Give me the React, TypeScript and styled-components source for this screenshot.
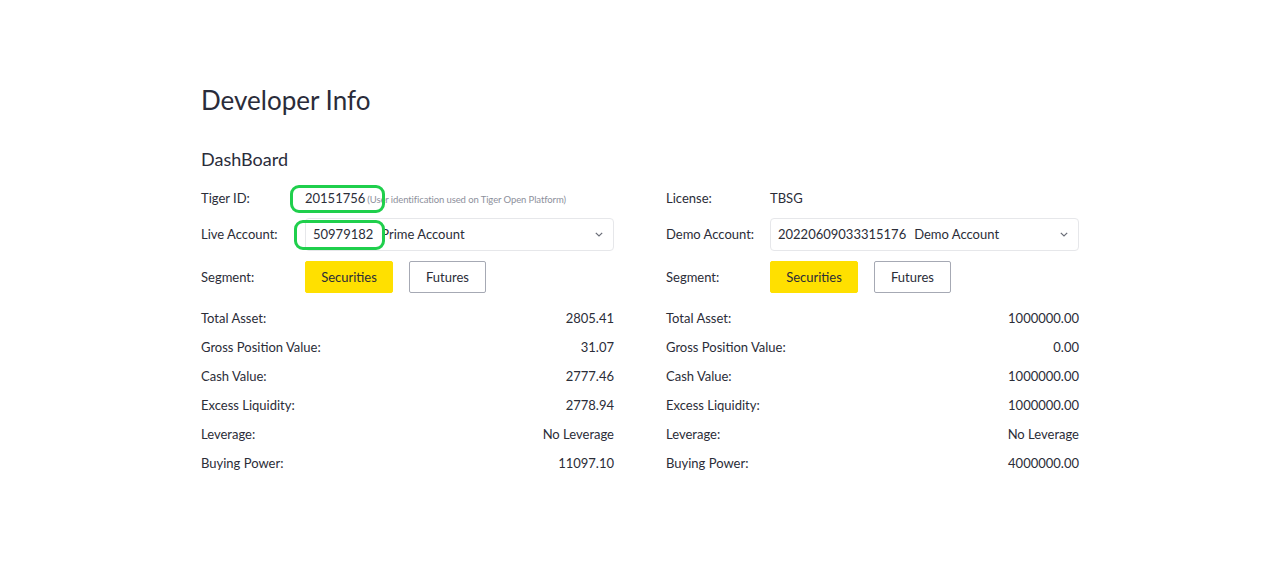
import React from "react";
import styled, { createGlobalStyle } from "styled-components";

const Global = createGlobalStyle`
  html, body { margin: 0; padding: 0; background: #fff; }
  body { font-family: Lato, "Open Sans", Arial, sans-serif; color: #2b2d38; }
`;

const Page = styled.div`
  width: 878px;
  margin-left: 201px;
  padding-top: 84px;
`;

const Title = styled.h1`
  margin: 0;
  font-size: 26px;
  font-weight: 400;
  line-height: 32px;
  color: #2a2c3a;
`;

const Section = styled.h2`
  margin: 31px 0 10px;
  font-size: 18px;
  font-weight: 400;
  line-height: 24px;
  color: #2a2c3a;
`;

const Columns = styled.div`
  display: grid;
  grid-template-columns: 413px 413px;
  column-gap: 52px;
`;

const Col = styled.div`
  display: flex;
  flex-direction: column;
`;

const Row = styled.div<{ $h: number }>`
  display: grid;
  grid-template-columns: 104px 1fr;
  align-items: center;
  height: ${(p) => p.$h}px;
  font-size: 13px;
`;

const Label = styled.span`
  color: #2b2d38;
`;

const Value = styled.span`
  position: relative;
  display: flex;
  align-items: baseline;
  gap: 2px;
`;

const Hint = styled.span`
  font-size: 9.5px;
  color: #8d909c;
  letter-spacing: -0.1px;
`;

const Select = styled.div`
  position: relative;
  height: 33px;
  box-sizing: border-box;
  border: 1px solid #e6e7ea;
  border-radius: 4px;
  display: flex;
  align-items: center;
  padding: 0 10px 0 7px;
  gap: 8px;
`;

const Grow = styled.span`
  flex: 1;
`;

const Buttons = styled.div`
  display: flex;
  gap: 16px;
`;

const SegButton = styled.button<{ $active?: boolean; $w: number }>`
  width: ${(p) => p.$w}px;
  height: 32px;
  box-sizing: border-box;
  padding: 0;
  border-radius: 2px;
  font-family: inherit;
  font-size: 13px;
  color: #2b2d38;
  background: ${(p) => (p.$active ? "#ffe000" : "#fff")};
  border: 1px solid ${(p) => (p.$active ? "#ffe000" : "#a6a9b4")};
`;

const Stats = styled.div`
  display: flex;
  flex-direction: column;
  margin-top: 2px;
`;

const Stat = styled.div`
  display: flex;
  justify-content: space-between;
  align-items: center;
  height: 29px;
  font-size: 13px;
`;

const Ring = styled.span<{ $l: number; $t: number; $w: number; $h: number }>`
  position: absolute;
  left: ${(p) => p.$l}px;
  top: ${(p) => p.$t}px;
  width: ${(p) => p.$w}px;
  height: ${(p) => p.$h}px;
  box-sizing: border-box;
  border: 3px solid #1fcf4c;
  border-radius: 9px;
  pointer-events: none;
`;

const Chevron = () => (
  <svg width="8" height="5" viewBox="0 0 8 5" fill="none">
    <path d="M0.8 0.8l3.2 3.2 3.2-3.2" stroke="#6b6e78" strokeWidth="1.2" />
  </svg>
);

type StatItem = [string, string];

const liveStats: StatItem[] = [
  ["Total Asset:", "2805.41"],
  ["Gross Position Value:", "31.07"],
  ["Cash Value:", "2777.46"],
  ["Excess Liquidity:", "2778.94"],
  ["Leverage:", "No Leverage"],
  ["Buying Power:", "11097.10"],
];

const demoStats: StatItem[] = [
  ["Total Asset:", "1000000.00"],
  ["Gross Position Value:", "0.00"],
  ["Cash Value:", "1000000.00"],
  ["Excess Liquidity:", "1000000.00"],
  ["Leverage:", "No Leverage"],
  ["Buying Power:", "4000000.00"],
];

const StatsBlock = ({ items }: { items: StatItem[] }) => (
  <Stats>
    {items.map(([k, v]) => (
      <Stat key={k}>
        <span>{k}</span>
        <span>{v}</span>
      </Stat>
    ))}
  </Stats>
);

const Segments = () => (
  <Row $h={48}>
    <Label>Segment:</Label>
    <Buttons>
      <SegButton $active $w={88}>Securities</SegButton>
      <SegButton $w={77}>Futures</SegButton>
    </Buttons>
  </Row>
);

export default function App() {
  return (
    <>
      <Global />
      <Page>
        <Title>Developer Info</Title>
        <Section>DashBoard</Section>
        <Columns>
          <Col>
            <Row $h={34}>
              <Label>Tiger ID:</Label>
              <Value>
                20151756 <Hint>(User identification used on Tiger Open Platform)</Hint>
                <Ring $l={-15} $t={-5} $w={95} $h={28} />
              </Value>
            </Row>
            <Row $h={38}>
              <Label>Live Account:</Label>
              <Select>
                <span>50979182</span>
                <Grow>Prime Account</Grow>
                <Chevron />
                <Ring $l={-12} $t={1} $w={91} $h={30} />
              </Select>
            </Row>
            <Segments />
            <StatsBlock items={liveStats} />
          </Col>
          <Col>
            <Row $h={34}>
              <Label>License:</Label>
              <Value>TBSG</Value>
            </Row>
            <Row $h={38}>
              <Label>Demo Account:</Label>
              <Select>
                <span>20220609033315176</span>
                <Grow>Demo Account</Grow>
                <Chevron />
              </Select>
            </Row>
            <Segments />
            <StatsBlock items={demoStats} />
          </Col>
        </Columns>
      </Page>
    </>
  );
}
